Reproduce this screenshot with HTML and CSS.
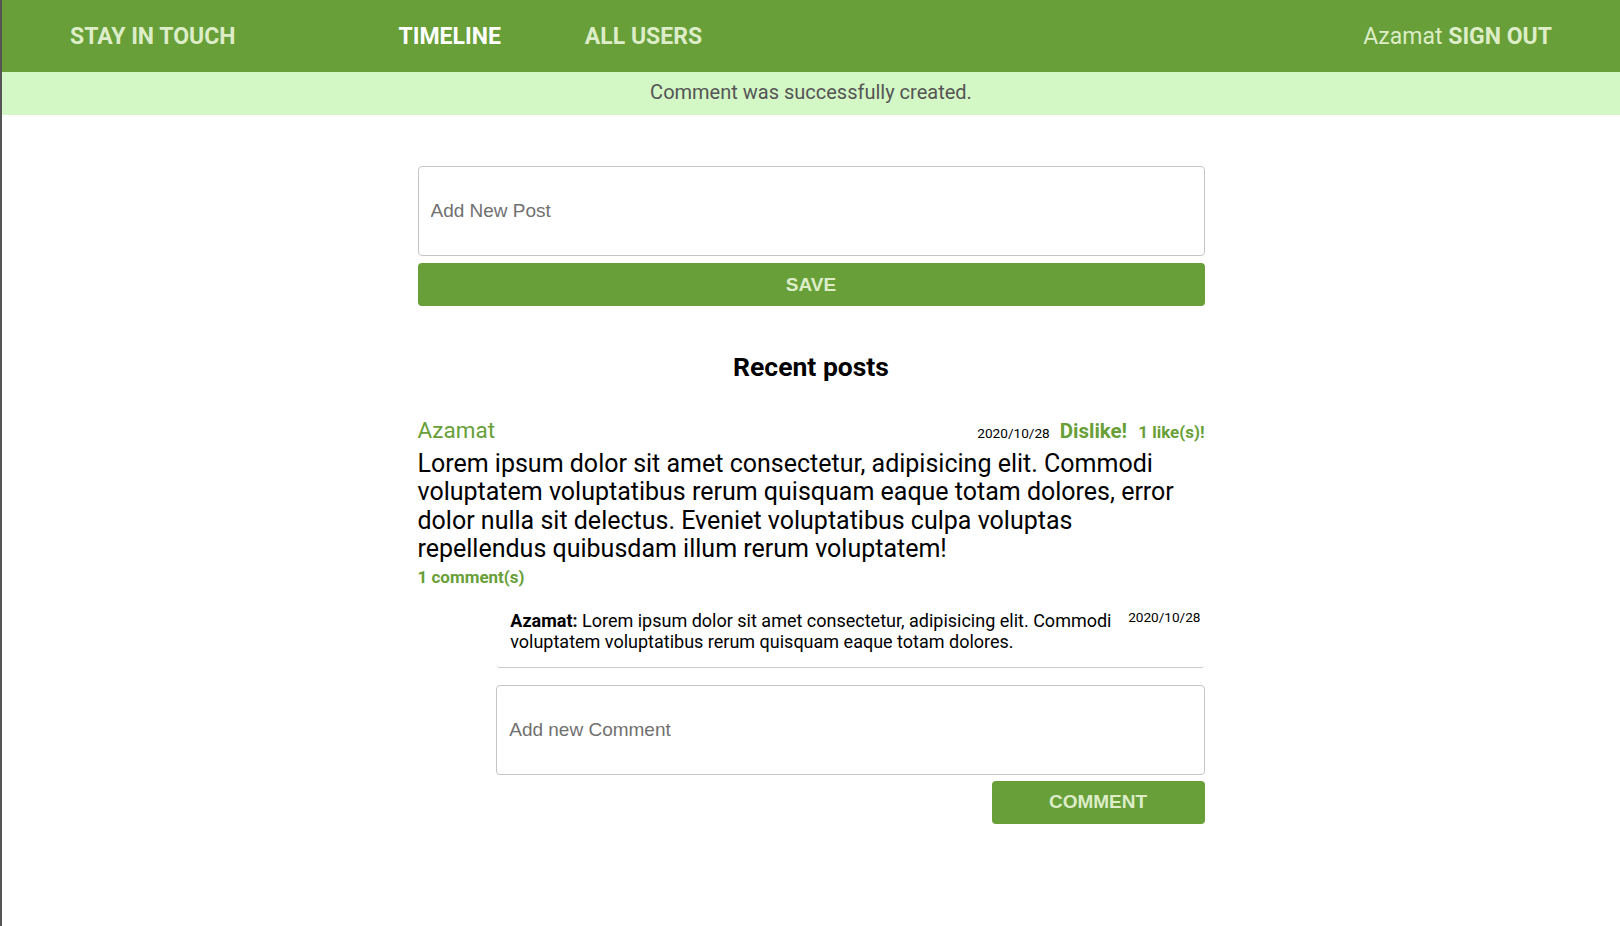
FILE: index.html
```html
<!DOCTYPE html>
<html lang="en">
<head>
<meta charset="utf-8">
<title>Stay in touch</title>
<link rel="stylesheet" href="styles.css">
</head>
<body>
<div class="frame">
  <header class="topbar">
    <a class="brand" href="#">STAY IN TOUCH</a>
    <nav class="links">
      <a class="link active" href="#">TIMELINE</a>
      <a class="link" href="#">ALL USERS</a>
    </nav>
    <div class="user">Azamat <a class="signout" href="#">SIGN OUT</a></div>
  </header>
  <div class="flash">Comment was successfully created.</div>

  <main class="content">
    <form class="post-form">
      <input class="field field-post" type="text" placeholder="Add New Post">
      <button class="btn btn-save" type="button">SAVE</button>
    </form>

    <h2 class="section-title">Recent posts</h2>

    <article class="post">
      <div class="post-head">
        <a class="author" href="#">Azamat</a>
        <div class="meta">
          <span class="date">2020/10/28</span>
          <a class="dislike" href="#">Dislike!</a>
          <span class="likes">1 like(s)!</span>
        </div>
      </div>
      <p class="post-body">Lorem ipsum dolor sit amet consectetur, adipisicing elit. Commodi voluptatem voluptatibus rerum quisquam eaque totam dolores, error dolor nulla sit delectus. Eveniet voluptatibus culpa voluptas repellendus quibusdam illum rerum voluptatem!</p>
      <div class="comment-count">1 comment(s)</div>

      <div class="comments">
        <div class="comment">
          <p class="comment-text"><strong>Azamat:</strong> Lorem ipsum dolor sit amet consectetur, adipisicing elit. Commodi voluptatem voluptatibus rerum quisquam eaque totam dolores.</p>
          <span class="comment-date">2020/10/28</span>
        </div>
        <form class="comment-form">
          <input class="field field-comment" type="text" placeholder="Add new Comment">
          <button class="btn btn-comment" type="button">COMMENT</button>
        </form>
      </div>
    </article>
  </main>
</div>
</body>
</html>
```

FILE: styles.css
```css
html, body {
  margin: 0;
  padding: 0;
  background: #ffffff;
}

body {
  font-family: Roboto, "Liberation Sans", sans-serif;
  color: #000;
  min-height: 926px;
  border-left: 2px solid #555555;
  box-sizing: border-box;
}

a { text-decoration: none; }

.topbar {
  height: 72px;
  background: #689f38;
  display: flex;
  align-items: center;
  padding: 0 68px;
}

.brand,
.link,
.signout {
  font-weight: 700;
  font-size: 23px;
  color: #dcedc8;
}

.links {
  display: flex;
  gap: 84px;
  margin-left: 163px;
}

.link.active { color: #ffffff; }

.user {
  margin-left: auto;
  font-size: 23px;
  color: #dcedc8;
}

.flash {
  box-sizing: border-box;
  height: 43px;
  padding-bottom: 3px;
  background: #d4f7c6;
  color: #555555;
  font-size: 20px;
  display: flex;
  align-items: center;
  justify-content: center;
}

.content {
  width: 787px;
  margin: 0 auto;
  padding-top: 51px;
}

.post-form {
  display: flex;
  flex-direction: column;
  gap: 7px;
}

.field {
  box-sizing: border-box;
  width: 100%;
  height: 90px;
  border: 1px solid #c4c4c4;
  border-radius: 4px;
  padding: 0 12px;
  font-family: "Liberation Sans", Arial, sans-serif;
  font-size: 19px;
  color: #333;
  background: #fff;
  outline: none;
}

.field::placeholder { color: #707070; }

.btn {
  height: 43px;
  border: 0;
  border-radius: 4px;
  background: #689f38;
  color: #dcedc8;
  font-family: "Liberation Sans", Arial, sans-serif;
  font-weight: 700;
  font-size: 19px;
}

.btn-save { width: 100%; }

.section-title {
  margin: 45px 0 0;
  text-align: center;
  font-size: 26.5px;
  font-weight: 700;
  line-height: 32px;
}

.post { margin-top: 34px; }

.post-head {
  display: flex;
  align-items: baseline;
  justify-content: space-between;
}

.author {
  font-size: 22.5px;
  color: #689f38;
}

.meta {
  display: flex;
  align-items: baseline;
}

.date {
  font-size: 13.6px;
  margin-right: 10px;
}

.dislike {
  font-size: 20.5px;
  font-weight: 700;
  color: #689f38;
  margin-right: 11px;
}

.likes {
  font-size: 17px;
  font-weight: 700;
  color: #689f38;
}

.post-body {
  margin: 7px 0 0;
  font-size: 25px;
  line-height: 28.3px;
}

.comment-count {
  font-size: 17px;
  font-weight: 700;
  color: #689f38;
  margin-top: 4px;
}

.comments {
  width: 90%;
  margin-left: auto;
  margin-top: 22px;
}

.comment {
  display: flex;
  align-items: flex-start;
  gap: 10px;
  padding: 0 4px 14px 14px;
  border-radius: 4px;
  box-shadow: 0 2px 1px -1px rgba(0,0,0,0.22);
}

.comment-text {
  margin: 0;
  padding-top: 2px;
  flex: 1;
  font-size: 18px;
  line-height: 20.7px;
}

.comment-date {
  font-size: 13.6px;
  line-height: 16px;
  white-space: nowrap;
}

.comment-form {
  margin-top: 18px;
  display: flex;
  flex-direction: column;
  align-items: flex-end;
  gap: 6px;
}

.btn-comment { width: 213px; }
```
